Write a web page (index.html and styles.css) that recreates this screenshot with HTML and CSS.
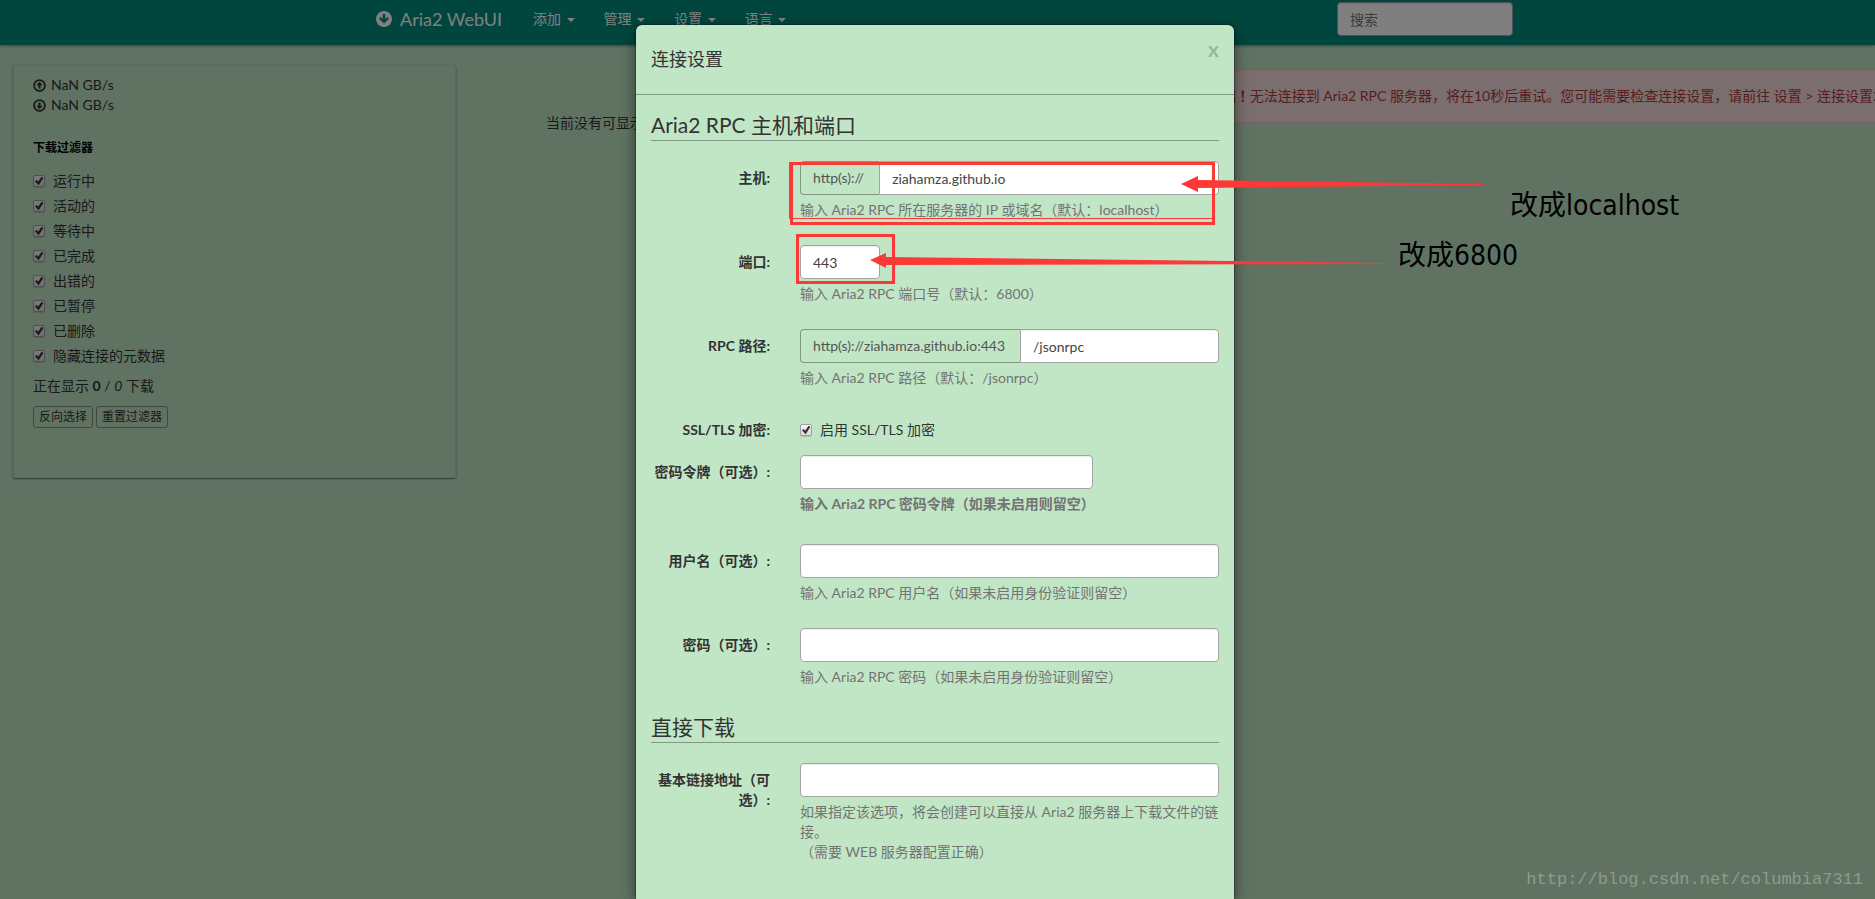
FILE: index.html
```html
<!DOCTYPE html>
<html lang="zh-CN">
<head>
<meta charset="utf-8">
<title>Aria2 WebUI</title>
<link rel="stylesheet" href="styles.css">
</head>
<body>
<nav class="navbar">
  <a class="brand" href="#">
    <svg class="brand-icon" viewBox="0 0 16 16" aria-hidden="true"><path fill="currentColor" fill-rule="evenodd" d="M8 0a8 8 0 1 0 0 16A8 8 0 0 0 8 0zM6.8 3h2.4v5l2-2 1.7 1.7L8 12.6 3.1 7.700l1.700-1.700 2 2z"/></svg>
    <span>Aria2 WebUI</span>
  </a>
  <ul class="menu">
    <li><a href="#">添加 <i class="caret"></i></a></li>
    <li><a href="#">管理 <i class="caret"></i></a></li>
    <li><a href="#">设置 <i class="caret"></i></a></li>
    <li><a href="#">语言 <i class="caret"></i></a></li>
  </ul>
  <input class="control search" type="text" placeholder="搜索" aria-label="搜索">
</nav>

<div class="page">
  <aside class="panel">
    <div class="speed">
      <svg viewBox="0 0 12 12" aria-hidden="true"><circle cx="6" cy="6" r="5" fill="none" stroke="currentColor" stroke-width="1.600"/><path fill="currentColor" d="M6 2.500l3 3.300H7v3H5v-3H3z"/></svg>
      <span>NaN GB/s</span>
    </div>
    <div class="speed">
      <svg viewBox="0 0 12 12" aria-hidden="true"><circle cx="6" cy="6" r="5" fill="none" stroke="currentColor" stroke-width="1.600"/><path fill="currentColor" d="M6 9.500l3-3.300H7v-3H5v3H3z"/></svg>
      <span>NaN GB/s</span>
    </div>
    <h2 class="filter-title">下载过滤器</h2>
    <div class="filters">
      <label class="check"><input type="checkbox" checked>运行中</label>
      <label class="check"><input type="checkbox" checked>活动的</label>
      <label class="check"><input type="checkbox" checked>等待中</label>
      <label class="check"><input type="checkbox" checked>已完成</label>
      <label class="check"><input type="checkbox" checked>出错的</label>
      <label class="check"><input type="checkbox" checked>已暂停</label>
      <label class="check"><input type="checkbox" checked>已删除</label>
      <label class="check"><input type="checkbox" checked>隐藏连接的元数据</label>
    </div>
    <p class="count">正在显示 <b>0</b> / <em>0</em> 下载</p>
    <div class="buttons">
      <button type="button">反向选择</button>
      <button type="button">重置过滤器</button>
    </div>
  </aside>
  <main class="downloads">当前没有可显示</main>
</div>

<div class="alert" role="alert"><b>糟糕<span class="bang">！</span></b>无法连接到 Aria2 RPC 服务器，将在10秒后重试。您可能需要检查连接设置，请前往 设置 &gt; 连接设置<button class="alert-close" type="button">x</button></div>

<div class="backdrop">
  <section class="modal" role="dialog" aria-labelledby="dialog-title">
    <header class="modal-header">
      <h3 id="dialog-title">连接设置</h3>
      <button class="close" type="button">x</button>
    </header>
    <form class="modal-body">
      <h4 class="legend">Aria2 RPC 主机和端口</h4>
      <div class="row">
        <label class="name" for="host">主机:</label>
        <div>
          <div class="group"><span class="addon">http(s)://</span><input class="control" id="host" type="text" value="ziahamza.github.io"></div>
          <p class="help">输入 Aria2 RPC 所在服务器的 IP 或域名（默认：localhost）</p>
        </div>
      </div>
      <div class="row">
        <label class="name" for="port">端口:</label>
        <div>
          <input class="control port" id="port" type="text" value="443">
          <p class="help">输入 Aria2 RPC 端口号（默认：6800）</p>
        </div>
      </div>
      <div class="row">
        <label class="name" for="path">RPC 路径:</label>
        <div>
          <div class="group"><span class="addon">http(s)://ziahamza.github.io:443</span><input class="control" id="path" type="text" value="/jsonrpc"></div>
          <p class="help">输入 Aria2 RPC 路径（默认：/jsonrpc）</p>
        </div>
      </div>
      <div class="row">
        <span class="name">SSL/TLS 加密:</span>
        <label class="check ssl"><input type="checkbox" checked>启用 SSL/TLS 加密</label>
      </div>
      <div class="row token-row">
        <label class="name" for="token">密码令牌（可选）:</label>
        <div>
          <input class="control token" id="token" type="text">
          <p class="help strong">输入 Aria2 RPC 密码令牌（如果未启用则留空）</p>
        </div>
      </div>
      <div class="row">
        <label class="name" for="user">用户名（可选）:</label>
        <div>
          <input class="control" id="user" type="text">
          <p class="help">输入 Aria2 RPC 用户名（如果未启用身份验证则留空）</p>
        </div>
      </div>
      <div class="row">
        <label class="name" for="pass">密码（可选）:</label>
        <div>
          <input class="control" id="pass" type="password">
          <p class="help">输入 Aria2 RPC 密码（如果未启用身份验证则留空）</p>
        </div>
      </div>
      <h4 class="legend">直接下载</h4>
      <div class="row">
        <label class="name" for="base">基本链接地址（可选）:</label>
        <div>
          <input class="control" id="base" type="text">
          <p class="help">如果指定该选项，将会创建可以直接从 Aria2 服务器上下载文件的链接。<br>（需要 WEB 服务器配置正确）</p>
        </div>
      </div>
    </form>
  </section>
</div>

<svg class="marks" width="1875" height="899" aria-hidden="true">
  <g fill="none" stroke="#fc3936">
    <path stroke-width="3" d="M791.500 163.500H1213.500V223.500H791.500z"/>
    <path stroke-width="1" d="M789.500 162V218.500H1213"/>
    <path stroke-width="3" d="M797.500 235.500H893.500V282.500H797.500z"/>
  </g>
  <g fill="#fc3936">
    <path d="M1181 184L1198 176V180L1483 184V185L1198 188V192z"/>
    <path d="M870 260L886 253V257L1388 263V264L886 265V268z"/>
  </g>
</svg>
<p class="note note-host">改成localhost</p>
<p class="note note-port">改成6800</p>
<p class="watermark">http://blog.csdn.net/columbia7311</p>
</body>
</html>
```
FILE: styles.css
```css
* { box-sizing: border-box; }

body {
  margin: 0;
  position: relative;
  min-height: 100vh;
  overflow: hidden;
  background: #c1e6c6;
  color: #333;
  font: 14px/20px Lato, "Noto Sans CJK SC", sans-serif;
}

h2, h3, h4, p, ul { margin: 0; padding: 0; font-weight: 400; }
a { color: inherit; text-decoration: none; }
button, input { font: inherit; color: inherit; }

.navbar {
  display: flex;
  align-items: center;
  height: 45px;
  padding: 0 362px 7px 376px;
  background: #008c7c;
  color: #fff;
  box-shadow: 0 1px 3px rgba(0, 0, 0, .4);
}
.brand { display: flex; align-items: center; gap: 8px; font-size: 18px; }
.brand-icon { width: 16px; height: 16px; }
.menu { display: flex; list-style: none; margin-left: 16px; }
.menu a { display: block; padding: 0 14px 0 15px; }
.caret {
  display: inline-block;
  margin-left: 2px;
  vertical-align: middle;
  border: 4px solid transparent;
  border-top-color: currentColor;
  border-bottom: 0;
}

.control {
  display: block;
  width: 100%;
  height: 34px;
  padding: 6px 12px;
  background: #fff;
  color: #444;
  border: 1px solid #a5a5a5;
  border-radius: 4px;
  box-shadow: inset 0 1px 1px rgba(0, 0, 0, .08);
}
.search { width: 176px; margin-left: auto; }
.search::placeholder { color: #777; }

.page { display: flex; gap: 90px; padding: 20px 13px; }
.panel {
  flex: 0 0 443px;
  padding: 9px 19px 49px;
  border: 1px solid #b4d6b9;
  border-radius: 2px;
  box-shadow: 0 1px 2px rgba(0, 0, 0, .5);
}
.speed { display: flex; align-items: center; gap: 5px; }
.speed svg { width: 13px; height: 13px; }
.filter-title { margin: 23px 0; font-size: 12px; line-height: 20px; font-weight: 700; color: #000; }
.filters { display: grid; gap: 5px; margin-top: -10px; }
.check { display: flex; align-items: center; gap: 8px; }
.check input {
  appearance: none;
  width: 12px;
  height: 12px;
  margin: 0;
  border: 1px solid #a0a0a0;
  border-radius: 2px;
  background: linear-gradient(#f4f4f4, #dcdcdc);
  box-shadow: 0 1px 1px rgba(0, 0, 0, .15);
}
.check input:checked::before {
  content: "";
  display: block;
  height: 10px;
  background: #333;
  clip-path: polygon(10% 52%, 28% 40%, 42% 58%, 76% 8%, 94% 20%, 46% 92%);
}
.count { margin: 10px 0; }
.buttons { display: flex; gap: 3px; }
.buttons button {
  padding: 1px 5px;
  border: 1px solid #7f9682;
  border-radius: 3px;
  background: transparent;
  font-size: 12px;
  line-height: 18px;
}
.downloads { padding-top: 48px; }

.alert {
  position: absolute;
  top: 70px;
  right: -35px;
  padding: 15px 27px 16px 15px;
  border: 1px solid #f5c6ce;
  background: #f4dedc;
  color: #b03a40;
  white-space: nowrap;
  line-height: 20px;
}
.bang { font-family: "Noto Sans CJK TC", sans-serif; font-feature-settings: "locl" 0; line-height: 1; }
.alert-close { padding: 0; border: 0; background: none; color: #777; font-size: 18px; line-height: 16px; }

.backdrop {
  position: absolute;
  inset: 0;
  display: flex;
  justify-content: center;
  padding: 25px 5px 0 0;
  overflow: hidden;
  background: rgba(0, 0, 0, .5);
}
.modal {
  width: 598px;
  border-radius: 6px 6px 0 0;
  background: #c1e6c6;
  box-shadow: 0 5px 15px rgba(0, 0, 0, .5), 0 0 2px #000;
}
.modal-header {
  display: flex;
  justify-content: space-between;
  padding: 22px 15px 23px;
  border-bottom: 1px solid #80987f;
  line-height: 24px;
}
.modal-header h3 { font-size: 18px; }
.close { align-self: flex-start; padding: 0; margin-top: -10px; border: 0; background: none; color: #9ab89e; font-size: 21px; font-weight: 700; line-height: 24px; }
.modal-body { padding: 15px; }
.legend {
  margin-bottom: 20px;
  border-bottom: 1px solid #80987f;
  font-size: 21px;
  line-height: 30px;
}
.row { display: grid; grid-template-columns: 119px 1fr; gap: 30px; margin-bottom: 15px; }
.name { padding-top: 7px; text-align: right; font-weight: 700; }
.group { display: flex; }
.addon {
  padding: 6px 15px 6px 12px;
  border: 1px solid #80987f;
  border-right: 0;
  border-radius: 4px 0 0 4px;
  color: #555;
}
.group .control { flex: 1; min-width: 0; border-radius: 0 4px 4px 0; }
.port { width: 80px; }
.token { width: 70%; }
.token-row { margin-bottom: 20px; }
.help { margin: 5px 0 10px; color: #737373; }
.strong { font-weight: 700; }
.ssl { padding-top: 7px; }

.marks { position: absolute; top: 0; left: 0; pointer-events: none; }
.note {
  position: absolute;
  color: #000;
  font: 28px/40px "DejaVu Sans Condensed", "Noto Sans", "Noto Sans CJK SC", sans-serif;
}
.note-host { left: 1510px; top: 186px; }
.note-port { left: 1398px; top: 236px; }
.watermark {
  position: absolute;
  right: 12px;
  bottom: 9px;
  color: #90998f;
  font: 17px/20px "Liberation Mono", monospace;
}
```
